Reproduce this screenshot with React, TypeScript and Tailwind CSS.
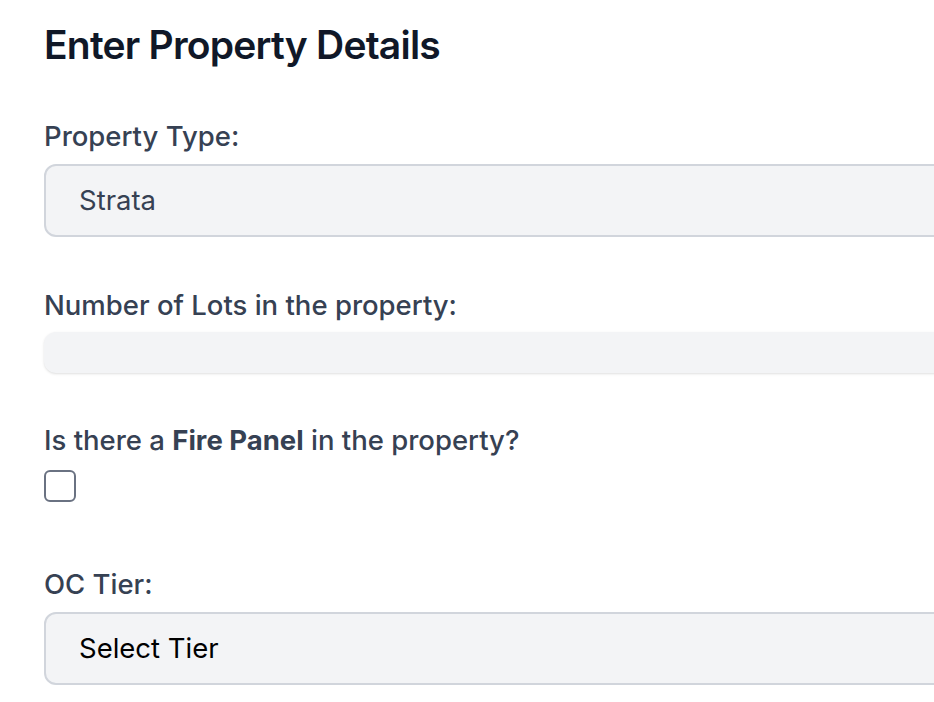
import React, { useState } from 'react';

const App: React.FC = () => {
  const [propertyType, setPropertyType] = useState<string>('Strata');
  const [lots, setLots] = useState<string>('');
  const [hasFirePanel, setHasFirePanel] = useState<boolean>(false);
  const [tier, setTier] = useState<string>('');

  return (
    <div className="min-h-screen w-screen overflow-hidden bg-white font-['Inter',sans-serif]">
      <div className="pl-[44px] pt-[21px] w-[1000px]">
        <h1 className="text-[39px] leading-[48px] font-semibold text-gray-900 tracking-[-0.02em]">
          Enter Property Details
        </h1>

        {/* Property type */}
        <label className="block mt-[51px] text-[27.5px] leading-[32px] font-medium text-gray-700">
          Property Type:
        </label>
        <select
          value={propertyType}
          onChange={(e) => setPropertyType(e.target.value)}
          className="mt-[12px] block w-full h-[73px] appearance-none rounded-xl border-2 border-gray-300 bg-gray-100 px-[33px] text-[27.5px] text-gray-700 outline-none"
        >
          <option>Strata</option>
          <option>Commercial</option>
          <option>Residential</option>
        </select>

        {/* Lots */}
        <label className="block mt-[52px] text-[27.5px] leading-[32px] font-medium text-gray-700">
          Number of Lots in the property:
        </label>
        <input
          type="number"
          value={lots}
          onChange={(e) => setLots(e.target.value)}
          className="mt-[11px] block w-full h-[41px] rounded-xl bg-gray-100 shadow-sm px-[33px] text-[27.5px] outline-none"
        />

        {/* Fire panel */}
        <label className="block mt-[51px] text-[27.5px] leading-[32px] font-medium text-gray-700">
          Is there a <span className="font-bold">Fire Panel</span> in the property?
        </label>
        <input
          type="checkbox"
          checked={hasFirePanel}
          onChange={(e) => setHasFirePanel(e.target.checked)}
          className="mt-[14px] block w-[32px] h-[32px] appearance-none rounded-md border-2 border-gray-500 bg-white"
        />

        {/* OC tier */}
        <label className="block mt-[66px] text-[27.5px] leading-[32px] font-medium text-gray-700">
          OC Tier:
        </label>
        <select
          value={tier}
          onChange={(e) => setTier(e.target.value)}
          className="mt-[12px] block w-full h-[73px] appearance-none rounded-xl border-2 border-gray-300 bg-gray-100 px-[33px] text-[27.5px] text-black outline-none"
        >
          <option value="">Select Tier</option>
          <option value="1">Tier 1</option>
          <option value="2">Tier 2</option>
          <option value="3">Tier 3</option>
        </select>
      </div>
    </div>
  );
};

export default App;
